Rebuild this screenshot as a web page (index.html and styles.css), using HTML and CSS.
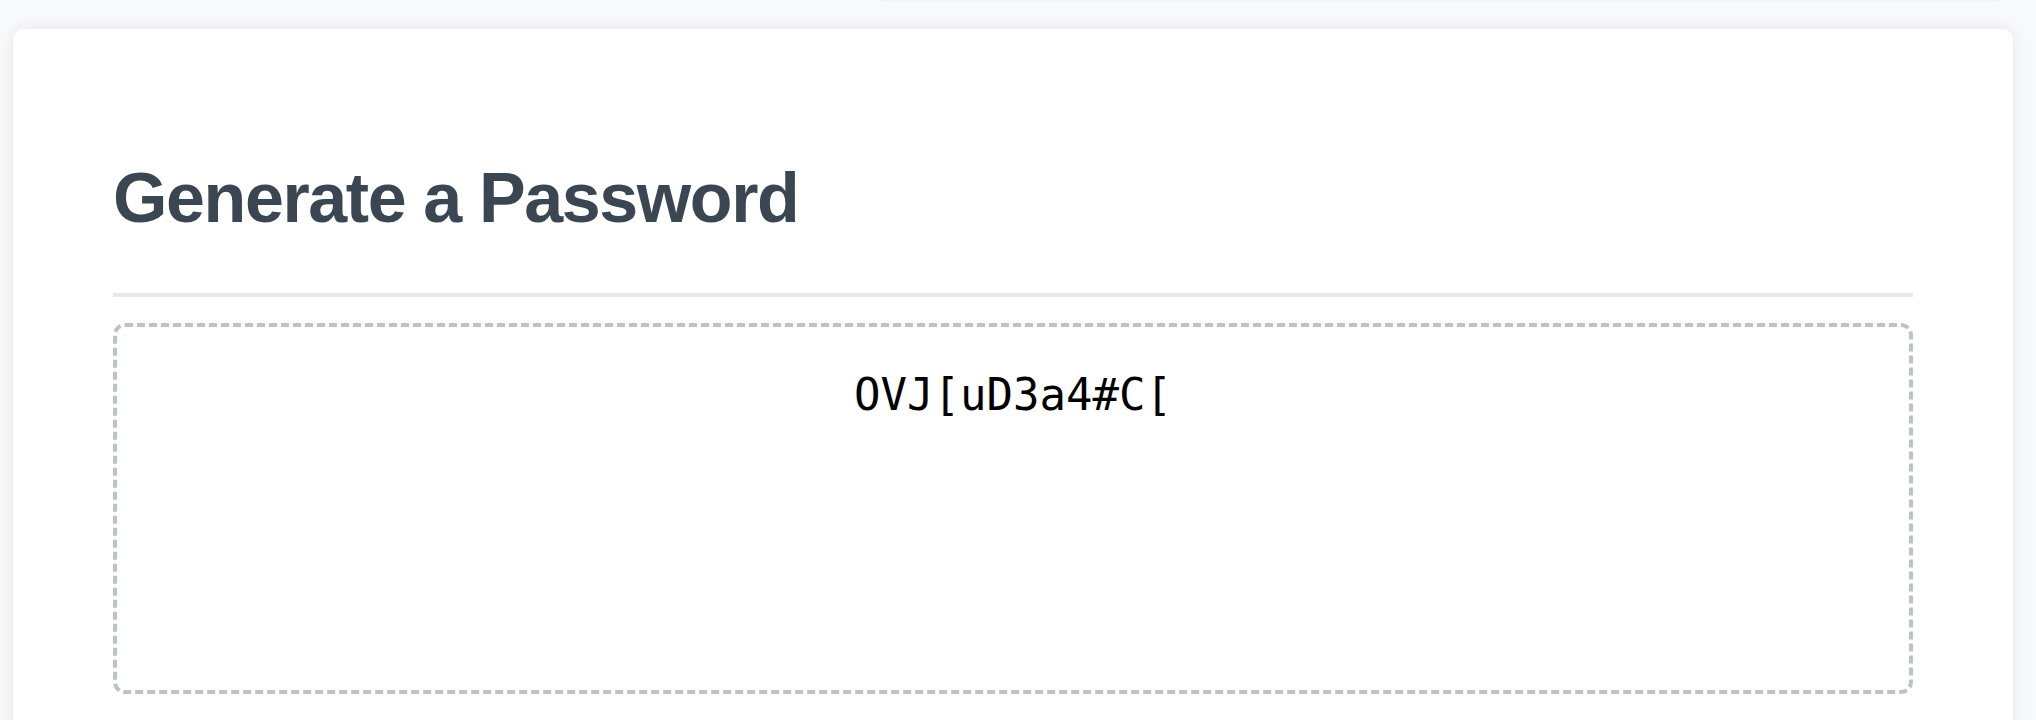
FILE: index.html
```html
<!DOCTYPE html>
<html lang="en">
<head>
<meta charset="utf-8">
<title>Generate a Password</title>
<link rel="stylesheet" href="styles.css">
</head>
<body>
<div class="topbar"></div>
<main class="card">
  <h1 class="title">Generate a Password</h1>
  <div class="divider"></div>
  <div class="output">OVJ[uD3a4#C[</div>
</main>
</body>
</html>
```
FILE: styles.css
```css
html, body {
  margin: 0;
  padding: 0;
}
body {
  background: #f8f9fb;
  overflow: hidden;
  height: 720px;
}
.topbar {
  margin-left: 882px;
  width: 1116px;
  height: 1px;
  background: #f0f1f3;
  box-shadow: 0 1px 4px rgba(0, 0, 0, 0.05);
}
.card {
  display: block;
  margin: 28px 0 0 13px;
  width: 2000px;
  min-height: 800px;
  box-sizing: border-box;
  padding: 131px 100px 0;
  background: #ffffff;
  border-radius: 11px;
  box-shadow: 0 0 16px rgba(20, 30, 50, 0.08);
}
.title {
  margin: 0;
  font-family: "Liberation Sans", Arial, sans-serif;
  font-weight: 700;
  font-size: 70px;
  letter-spacing: -1.4px;
  line-height: 77px;
  color: #3a4752;
}
.divider {
  margin-top: 56px;
  height: 4px;
  background: #e8e9eb;
}
.output {
  margin-top: 26px;
  box-sizing: border-box;
  height: 371px;
  border: 4px dashed #bcc2ca;
  border-radius: 12px;
  padding-top: 42px;
  text-align: center;
  font-family: "DejaVu Sans Mono", monospace;
  font-size: 44px;
  color: #000000;
}
```
